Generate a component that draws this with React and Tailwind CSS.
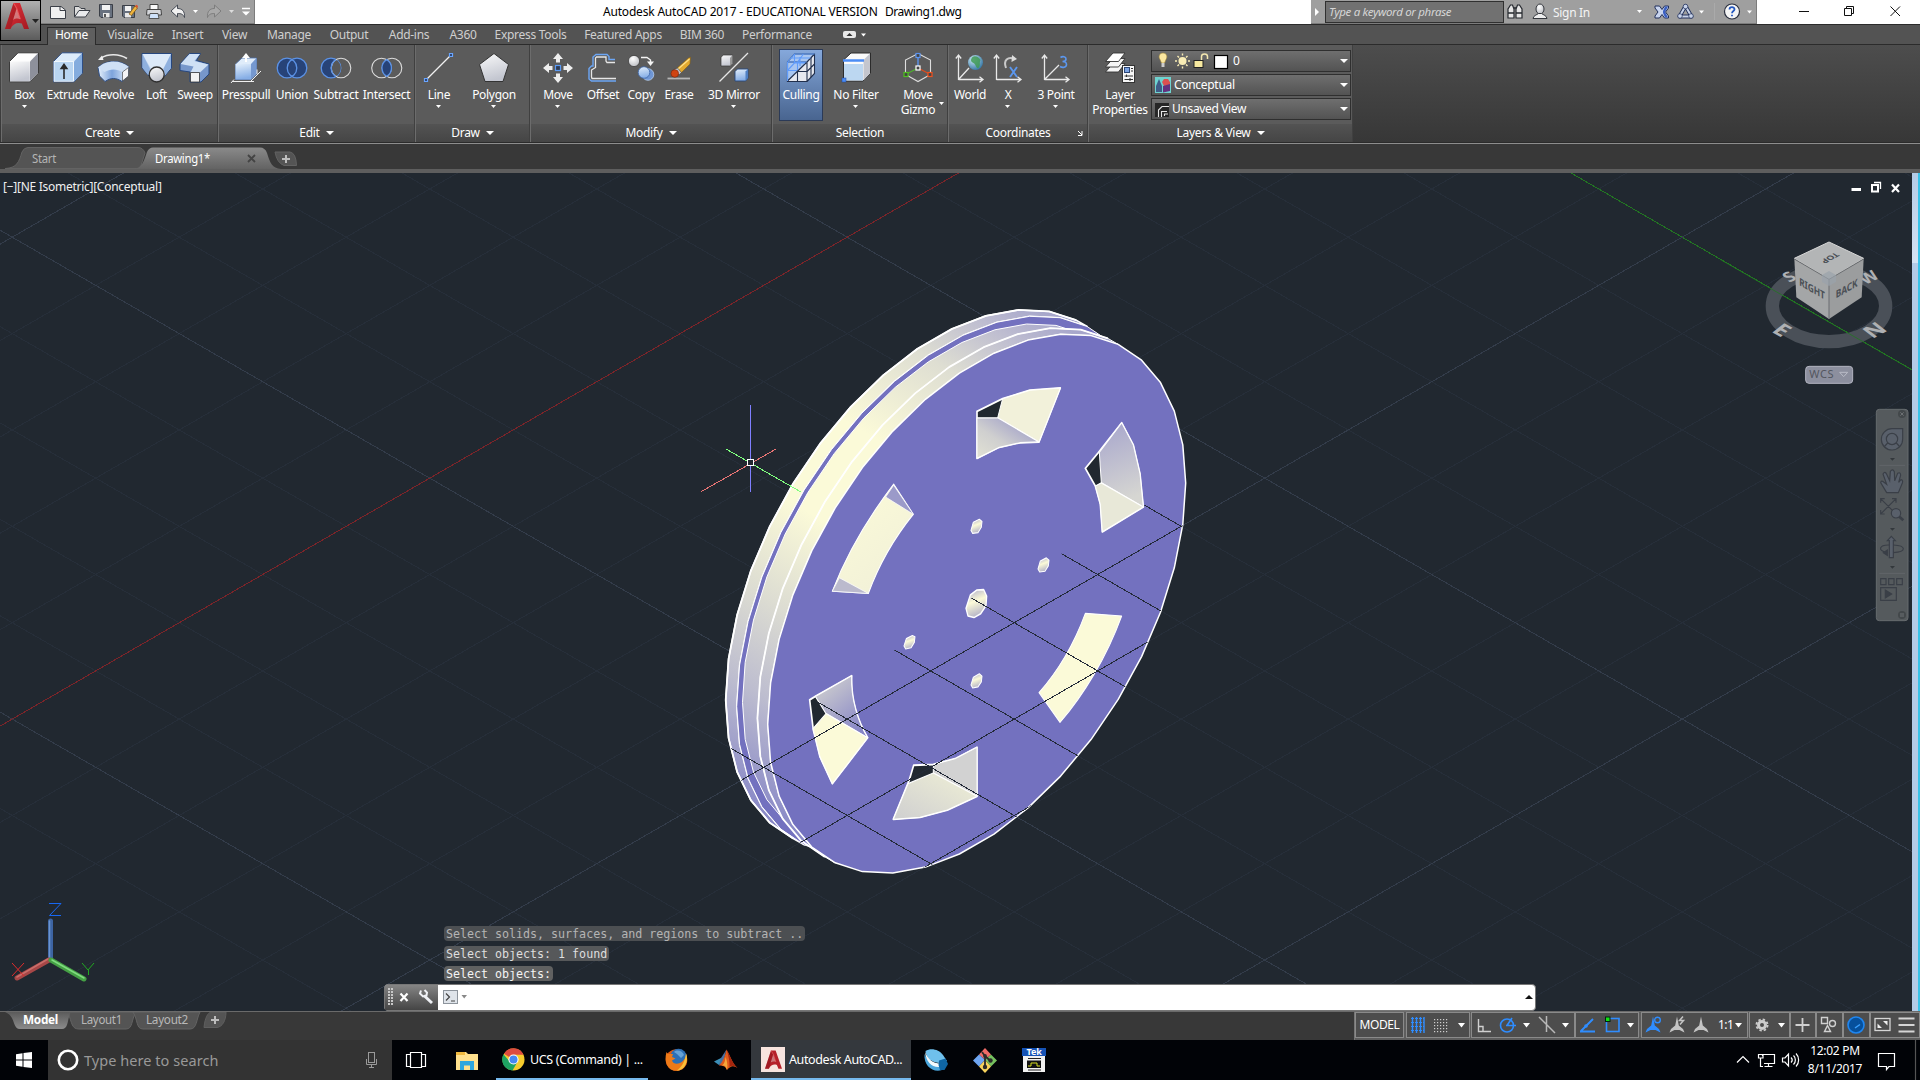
import React from 'react';

/* ---------- small shared pieces ---------- */
const Tri = ({ s = 6, c = '#fff', className = '' }) => (
  <svg width={s} height={Math.ceil(s / 2)} viewBox="0 0 8 4" preserveAspectRatio="none" className={`shrink-0 ${className}`}>
    <path d="M0 0H8L4 4Z" fill={c} />
  </svg>
);
const Ic = ({ children, w = 32, h = 32, className = '' }) => (
  <svg width={w} height={h} viewBox={`0 0 ${w} ${h}`} className={`shrink-0 overflow-visible ${className}`} fill="none">
    {children}
  </svg>
);

const Defs = () => (
  <svg width="0" height="0" className="absolute">
    <defs>
      <linearGradient id="gGrey" x1="0" y1="0" x2="0.3" y2="1"><stop offset="0" stopColor="#fafafa" /><stop offset="1" stopColor="#c3c6d0" /></linearGradient>
      <linearGradient id="gBlue" x1="0" y1="0" x2="0.2" y2="1"><stop offset="0" stopColor="#e3effb" /><stop offset="1" stopColor="#86aee6" /></linearGradient>
      <linearGradient id="gRev" x1="0" y1="0" x2="1" y2="0"><stop offset="0" stopColor="#e8f2fc" /><stop offset=".45" stopColor="#7da3dc" /><stop offset="1" stopColor="#e8f2fc" /></linearGradient>
      <linearGradient id="gRed" x1="0" y1="0" x2="1" y2="1"><stop offset="0" stopColor="#e8323a" /><stop offset="1" stopColor="#a31a22" /></linearGradient>
      <radialGradient id="gBall" cx=".4" cy=".3" r=".8"><stop offset="0" stopColor="#fff" /><stop offset="1" stopColor="#b4b6bc" /></radialGradient>
      <radialGradient id="gGlobe" cx=".35" cy=".3" r=".8"><stop offset="0" stopColor="#cfeaf5" /><stop offset="1" stopColor="#2a6f9f" /></radialGradient>
    </defs>
  </svg>
);

/* ---------- ribbon icons, 32 x 32 ---------- */
const icons = {
  box: <Ic><path d="M.5 9.500 9 .8H29.500V21L21 29.800H.500Z" fill="#fdfdfd" stroke="#3a3a3a" /><path d="M1 9.500H20.800V29.400H1Z" fill="url(#gGrey)" /><path d="M21 9.500 29 1.200V21L21 29.200Z" fill="#8d909b" /></Ic>,
  extrude: <Ic><path d="M1.500 9.500 10 .8H30.500V21L22 29.800H1.500Z" fill="#dcebfa" stroke="#2f4f86" /><path d="M2 9.500H21.500V29.300H2Z" fill="#b9d5f1" stroke="#fff" strokeWidth=".7" /><path d="M22 9.500 30 1.300V21L22 29.200Z" fill="#84acde" /><path d="M12 27V14M9.200 16.500 12 12.500 14.800 16.500Z" stroke="#2a2a2a" strokeWidth="1.600" fill="#2a2a2a" /></Ic>,
  revolve: <Ic><path d="M3 6C10 1.500 21 1.500 29 6.500" stroke="#e8e8e8" strokeWidth="1.600" /><path d="M0 8 4 3.500 5.500 8Z" fill="#eee" /><path d="M0 15.500C8 7.500 23 7.500 31 15L30 24 24 29.500C18 25.500 13 25.500 7 29.500L1.500 24Z" fill="url(#gRev)" stroke="#2f4f86" /><path d="M0 15.500C8 7.500 23 7.500 31 15L24.500 20C19 16.500 12 16.500 6.500 20Z" fill="#cfe0f5" /><path d="M24.500 20 30.500 15.500V24L24.500 29Z" fill="#f4f4f6" stroke="#333" strokeWidth=".6" /></Ic>,
  loft: <Ic><path d="M1 1.500H30.500V16L24 24H8L1 16Z" fill="#b5cdef" stroke="#27477e" /><path d="M1.500 2H30L22 17H10Z" fill="#dce9f8" /><path d="M1.500 2 9 17 7 23 1.500 16ZM30 2 22.500 17 24 23 30 16Z" fill="#8fb0de" /><circle cx="15.700" cy="22.500" r="7.500" fill="url(#gGrey)" stroke="#303030" strokeWidth="1.300" /></Ic>,
  sweep: <Ic><path d="M1 12 10.500 1.500H21.500L17.500 8.500 30 12V22L22 30H11V20L1 18.500Z" fill="#7797cb" stroke="#27477e" /><path d="M1.500 12 10.500 2H21L15.500 9 29.500 12.500 21 20.500H11.500L14.500 14.500Z" fill="#cfe0f5" /><path d="M11.500 20.500H20.500V30H11.500Z" fill="#f2f2f2" stroke="#333" strokeWidth=".8" /></Ic>,
  presspull: <Ic><path d="M5.500 12 12 6H26.500V22L21 27.500H5.500Z" fill="#dfecfa" stroke="#4b6ea8" strokeWidth=".8" /><path d="M5.500 12H21V27.500H5.500Z" fill="url(#gBlue)" /><path d="M21 12 26.500 6V22L21 27.500Z" fill="#7598cf" /><path d="M2 29.500H24M4 27.500 1 31M20 30 31 19M27 17.500V22" stroke="#f0f0f0" /><path d="M16 10V4" stroke="#fff" strokeWidth="2" /><path d="M12 6 16 1 20 6Z" fill="#fff" /></Ic>,
  union: <Ic><circle cx="11" cy="16" r="9.800" fill="#274378" /><circle cx="21" cy="16" r="9.800" fill="#274378" /><circle cx="11" cy="16" r="9.800" stroke="#5b92e6" strokeWidth="1.300" /><circle cx="21" cy="16" r="9.800" stroke="#5b92e6" strokeWidth="1.300" /></Ic>,
  subtract: <Ic><circle cx="11" cy="16" r="9.800" fill="#274378" stroke="#5b92e6" strokeWidth="1.300" /><path d="M16 7.600A9.800 9.800 0 0 1 16 24.400A9.800 9.800 0 0 1 16 7.600Z" fill="#585858" /><circle cx="21" cy="16" r="9.800" stroke="#dcdcdc" strokeWidth="1.100" /><path d="M16 7.600A9.800 9.800 0 0 0 16 24.400" stroke="#5b92e6" strokeWidth="1.300" /></Ic>,
  intersect: <Ic><circle cx="10.500" cy="16" r="9.800" stroke="#dcdcdc" strokeWidth="1.100" /><circle cx="21" cy="16" r="9.800" stroke="#dcdcdc" strokeWidth="1.100" /><path d="M15.700 7.600A9.800 9.800 0 0 1 15.700 24.400A9.800 9.800 0 0 1 15.700 7.600Z" fill="#274378" stroke="#5b92e6" strokeWidth="1.300" /></Ic>,
  line: <Ic><path d="M4 27 27 4" stroke="#f2f2f2" strokeWidth="1.200" /><path d="M1.500 26.500h3v3h-3zM26.500 1.500h3v3h-3z" fill="#2c3f66" stroke="#69a5ff" strokeWidth="1.200" /></Ic>,
  polygon: <Ic><path d="M16 1.500 30.500 12.500 25 29.500H7L1.500 12.500Z" fill="url(#gGrey)" stroke="#333" /></Ic>,
  move: <Ic><path d="M16 1 21 7H18V10.500H14V7H11ZM16 31 21 25H18V21.500H14V25H11ZM1 16 7 11V14H10.500V18H7V21ZM31 16 25 11V14H21.500V18H25V21Z" fill="#eee" /><rect x="13.500" y="13.500" width="5" height="5" stroke="#5b9bf5" strokeWidth="1.200" fill="#2e3a52" /></Ic>,
  offset: <Ic><path d="M29 29H4.500L2 27V16.500L4.500 14H6V5L9 2.500H20L22 4.500V7.500H28" stroke="#6ca6f5" strokeWidth="1.400" /><path d="M29 26.500H5L4.500 25V18L8.500 15.500V6L9.500 5H19V9L20 10.500H28" stroke="#e6e6e6" strokeWidth="1.300" /></Ic>,
  copy: <Ic><circle cx="9" cy="9" r="5.600" fill="url(#gBall)" stroke="#333" strokeWidth=".7" /><path d="M16 5.500H22L25.500 8V10" stroke="#f5f5f5" strokeWidth="1.400" /><path d="M22 9.500H29L25.500 14Z" fill="#f5f5f5" /><circle cx="23" cy="22.500" r="5.800" fill="#6f96d4" stroke="#b8d2f5" strokeWidth=".8" /><circle cx="19" cy="20.500" r="5.800" fill="url(#gBlue)" stroke="#3b66ab" strokeWidth=".8" /></Ic>,
  erase: <Ic><path d="M4.500 26.500H27" stroke="#b5b5b5" strokeWidth="1.800" /><path d="M13 17 25.500 6 27.500 5 27 12 17.500 21.500Z" fill="#e3a92e" stroke="#7a5a1c" strokeWidth=".6" /><path d="M14 18 26.500 7" stroke="#ffe08a" strokeWidth="1.200" /><path d="M11 17.500 14.500 16 18.500 20.500 16 23Z" fill="#bfc3cb" stroke="#333" strokeWidth=".5" /><circle cx="11.800" cy="21.500" r="3.800" fill="#d04412" stroke="#7c2407" strokeWidth=".6" /></Ic>,
  mirror: <Ic><path d="M1.500 29.500 30 1" stroke="#e6e6e6" strokeWidth="1.200" /><path d="M3 5.500 5 3H14.500V11.500L12 14H3Z" fill="url(#gGrey)" stroke="#333" strokeWidth=".7" /><path d="M12 6 14.500 3V11.500L12 14Z" fill="#999" /><path d="M17 19.500 19.500 17H30V26L27.500 29H17Z" fill="url(#gBlue)" stroke="#27477e" strokeWidth=".9" /><path d="M27.500 19.500 30 17V26L27.500 29Z" fill="#4f80c4" /></Ic>,
  culling: <Ic><path d="M2.500 10 9.500 2H29.500L2.500 29Z" fill="#a9c6f0" /><path d="M12 29.500H22L30 21V2L2 29Z" fill="#e6e8ef" /><path d="M2 29.500 22 10M2.500 10H22V29.500H2.500ZM2.500 10 9.500 2H29.500V21.500L22 29.500M22 10 29.500 2" stroke="#22304d" strokeWidth="1.100" /><path d="M12 19.500H22M12.500 20V29.500M26 6V25M22 19.500 29.500 12" stroke="#22304d" strokeWidth="1.100" /><path d="M2.500 10 9.500 2H29.500M2.500 10V29M2.500 10H21.500M6 6H25.500M2.500 18.500H12M2.500 18.500 9.500 11V2M12.500 10V18M12.500 10 18.500 2M9.500 11H20M15 5V14" stroke="#5f9bfa" strokeWidth="1.100" /></Ic>,
  nofilter: <Ic><path d="M3.500 8 11 1H30.500V21.500L23 29H3.500Z" fill="#fafafa" stroke="#2b2b2b" /><path d="M4 12H23V28.500H4Z" fill="#bcd7f1" /><path d="M23.500 8 30 1.500V21.500L23.500 28.500Z" fill="#c4c6ce" /><path d="M3 8.500H24" stroke="#4b8cf5" strokeWidth="2.500" /><rect x="2" y="26" width="4" height="4" fill="#4b8cf5" stroke="#1e49a0" strokeWidth=".5" /></Ic>,
  gizmo: <Ic><path d="M16 1.500 28.500 8V22.500L16 29.500 3.500 22.500V8Z" stroke="#dedede" strokeWidth="1.100" /><path d="M16 16V3" stroke="#5b93ee" strokeWidth="1.400" /><path d="M16 16 4.500 22" stroke="#4fae2e" strokeWidth="1.400" /><path d="M16 16 27.500 22" stroke="#dc4c1e" strokeWidth="1.400" /><g fill="#444" strokeWidth="1.200"><rect x="14" y="1.500" width="4" height="4" stroke="#5b93ee" /><rect x="2" y="20.500" width="4" height="4" stroke="#4fc11f" /><rect x="26" y="20.500" width="4" height="4" stroke="#f0521e" /><rect x="14" y="14" width="4" height="4" stroke="#fff" /></g></Ic>,
  world: <Ic><path d="M4.500 28V4M1.800 6.500 4.500 3 7.200 6.500M4.500 27.500H28M25.500 24.800 29 27.500 25.500 30.200M4.500 27.500 15 16" stroke="#e9e9e9" strokeWidth="1.300" /><circle cx="21.500" cy="10.500" r="7.500" fill="url(#gGlobe)" /><path d="M18.500 5C21 3 25 5 26.500 8 25 11 27 13 24.500 16 22 17 22 12 19.500 11 17 10 16 8 18.500 5Z" fill="#3f9a55" opacity=".85" /></Ic>,
  xaxis: <Ic><path d="M4.500 28V4M1.800 6.500 4.500 3 7.200 6.500M4.500 27.500H28M25.500 24.800 29 27.500 25.500 30.200" stroke="#e9e9e9" strokeWidth="1.300" /><path d="M14 16C11 8 16 4.500 22 6.500" stroke="#c9c9c9" strokeWidth="2" /><path d="M20 3 25 7 19.500 10Z" fill="#ddd" /><path d="M18 15 25 25M25 15 18 25" stroke="#5c97ee" strokeWidth="1.900" /></Ic>,
  point3: <Ic><path d="M4.500 28V4M1.800 6.500 4.500 3 7.200 6.500M4.500 27.500H28M25.500 24.800 29 27.500 25.500 30.200M4.500 27.500 19 13" stroke="#e9e9e9" strokeWidth="1.300" /><path d="M20.500 5.500C22.500 4 26 4.500 26 7 26 9 24.500 9.500 22.500 9.500 25 9.500 26.500 10.500 26.500 12.500 26.500 15.500 22.500 16 20 14.500" stroke="#5c97ee" strokeWidth="1.600" /></Ic>,
  layers: <Ic><path d="M1.500 20 9 11.500H21L14.500 20Z" fill="#f5f5f5" stroke="#333" strokeWidth=".9" /><path d="M1.500 15 9 6.500H21L14.500 15Z" fill="#f5f5f5" stroke="#333" strokeWidth=".9" /><path d="M1.500 9.500 9 1H21L14.500 9.500Z" fill="#fff" stroke="#333" strokeWidth=".9" /><rect x="18.500" y="13.500" width="12" height="17" fill="#f7f7f7" stroke="#333" /><rect x="20.500" y="15.500" width="5" height="5" fill="#7ba3e2" stroke="#2c4676" /><path d="M27 16.500H29M27 19H29M20.500 24H29M20.500 27.500H29M22.500 22.500V25M26 26V29" stroke="#333" strokeWidth="1" /></Ic>,
};

/* ---------- ribbon structure ---------- */
const Btn = ({ icon, label, w, arrow, second, on }) => (
  <div className={`${w} flex flex-col items-center h-[72px] shrink-0 ${on ? 'bg-gradient-to-b from-[#86a9dc] to-[#48648f] outline outline-1 -outline-offset-1 outline-[#2b3a57]' : ''}`}>
    <div className="h-8 mt-[3px]">{icons[icon]}</div>
    <div className="mt-[2px] h-[15px] leading-[17px] text-white">{label}</div>
    {second && (
      <div className="relative leading-[17px] text-white">{second}
        <Tri s={5} className={`absolute -right-[9px] top-[1px] ${arrow ? '' : 'hidden'}`} />
      </div>
    )}
    {arrow && !second && <Tri s={5} className="mt-[4px] mr-px" />}
  </div>
);
const Panel = ({ w, title, children, tri, corner, pad = '' }) => (
  <div className={`${w} h-[97px] shrink-0 flex flex-col bg-[#5b5b5b] border-l border-l-[#6c6c6c] border-r border-r-[#404040]`}>
    <div className={`flex h-[79px] pt-1 -ml-px -mr-px ${pad}`}>{children}</div>
    <div className="relative h-[18px] flex items-center justify-center gap-[6px] bg-gradient-to-b from-[#535353] to-[#454545] text-white">
      <span>{title}</span>
      {tri && <Tri s={8} />}
      {corner && <svg width="6" height="6" className="absolute right-[4px] top-[6px]" fill="none" stroke="#fff"><path d="M1 1 5 5M5 1V5.500H1" /></svg>}
    </div>
  </div>
);
const Drop = ({ children }) => (
  <div className="h-[22px] w-[200px] flex items-center border border-[#2f2f2f] bg-gradient-to-b from-[#6f6f6f] to-[#535353] pl-[3px] pr-[2px] text-white">
    {children}<Tri s={8} className="ml-auto" />
  </div>
);

const menu = [['Visualize', 'w-[67px]'], ['Insert', 'w-[47px]'], ['View', 'w-[47px]'], ['Manage', 'w-[62px]'], ['Output', 'w-[58px]'], ['Add-ins', 'w-[62px]'], ['A360', 'w-[46px]'], ['Express Tools', 'w-[89px]'], ['Featured Apps', 'w-[96px]'], ['BIM 360', 'w-[62px]'], ['Performance', 'w-[88px]']];

function TitleBar() {
  return (
    <div className="h-6 flex bg-white relative shrink-0">
      <div className="w-[255px] bg-[#9f9f9f] border-b border-r border-[#7c7c7c] flex items-center pl-[49px] shrink-0">
        <Ic w={206} h={23}>
          <path d="M1.500 6.500H12L16.500 10V18.500H1.500Z" fill="#f0f0f0" stroke="#3b3f47" /><path d="M11 6.500V10.500H16" stroke="#3b3f47" />
          <path d="M25.500 17V6.500H30L32 8.500H36V10.500" fill="#ddd" stroke="#3b3f47" /><path d="M25.500 17 30 10.500H41L36.500 17Z" fill="#e9eaec" stroke="#3b3f47" />
          <g transform="translate(50 4)"><path d="M.5 .500H13.500V13.500H2L.500 12Z" fill="#68717f" stroke="#3b3f47" /><path d="M3 1H11V6H3Z" fill="#f2f2f2" /><path d="M4 9H10.500V13.500H4Z" fill="#e8e8e8" /><path d="M5 10H7V13H5Z" fill="#555" /></g>
          <g transform="translate(73 4)"><path d="M.5 1.500H12.500V13.500H2L.500 12Z" fill="#68717f" stroke="#3b3f47" /><path d="M3 2H9V7H3Z" fill="#f2f2f2" /><path d="M3 9H9V13.500H3Z" fill="#e8e8e8" /><path d="M7 10 13 2 15.500 4 9.500 11.500Z" fill="#f0b43c" stroke="#70511c" strokeWidth=".7" /><path d="M13 2 15.500 4 16 2 14.500 .8Z" fill="#e0502a" /></g>
          <g transform="translate(97 4)"><path d="M4 .5H12V6H4Z" fill="#fafafa" stroke="#444" /><path d="M1 5.500H15L15.500 11H.500Z" fill="#d5d7db" stroke="#444" /><path d="M4 9.500H12L13 14.500H3Z" fill="#cfe2fa" stroke="#555" /></g>
          <path d="M122 11 128.500 5V8.500C133 8.500 136 11 135.500 17.500 134 14 132 13.500 128.500 13.500V17Z" fill="#f1f1f1" stroke="#454a54" />
          <path d="M144 10H149L146.500 13Z" fill="#fff" />
          <path d="M172 11 165.500 5V8.500C161 8.500 158 11 158.500 17.500 160 14 162 13.500 165.500 13.500V17Z" fill="#a9a9a9" stroke="#7d7d7d" />
          <path d="M180 10H185L182.500 13Z" fill="#ddd" />
          <path d="M193 8.500H201" stroke="#fff" strokeWidth="1.500" /><path d="M193 11.500H201L197 15.500Z" fill="#fff" />
        </Ic>
      </div>
      <div className="w-[1056px] shrink-0 flex pl-[348px] pt-[3px] leading-[18px] text-black tracking-[-0.19px] whitespace-nowrap">
        <span className="w-[282px]">Autodesk AutoCAD 2017 - EDUCATIONAL VERSION</span>
        <span className="tracking-[-0.450px]">Drawing1.dwg</span>
      </div>
      <div className="w-[446px] shrink-0 bg-[#9f9f9f] border-b border-r border-[#7c7c7c] flex items-center">
        <svg width="14" height="23" className="shrink-0"><path d="M4 8V16L8 12Z" fill="#fff" /></svg>
        <div className="w-[179px] mr-px shrink-0 h-[22px] bg-[#717171] border border-[#303030] italic text-[#d6d6d6] leading-[19px] pl-[3px] text-[11.500px] tracking-[-0.320px]">Type a keyword or phrase</div>
        <Ic w={44} h={23}>
          <g transform="translate(-2)"><path d="M5 18V9L7.500 5H9.500L11 9V18ZM13 18V9L14.500 5H16.500L19 9V18Z" fill="#e6e6e6" stroke="#25282e" strokeWidth="1.200" /><path d="M5 13H11M13 13H19M11 8H13" stroke="#25282e" strokeWidth="1.400" /></g>
          <ellipse cx="35" cy="9" rx="4" ry="5" fill="url(#gBall)" stroke="#33363c" /><path d="M28 18.500C28.500 15.500 31.500 15 33.500 13.500H36.500C38.500 15 41.500 15.500 42 18.500Z" fill="#eee" stroke="#33363c" />
        </Ic>
        <span className="text-[#f4f4f4] text-[12px] ml-[4px] mt-[2px] w-[84px] shrink-0">Sign In</span>
        <Tri s={5} />
        <Ic w={112} h={23}>
          <g transform="translate(12 5)"><path d="M1 1H5.500L8 4.500 10.500 1H14.500V3L11.500 7 14.500 11V13H10.500L8 9.500 5.500 13H1V11L4 7 1 3Z" fill="#c8d4ee" stroke="#22315c" /><path d="M9 6 11 1.500H14L11 7 14 12.500H11L9 8Z" fill="#3a5fc2" /></g>
          <g transform="translate(35 4)"><path d="M8.500 2 14.500 12.500H2.500Z" fill="none" stroke="#22315c" strokeWidth="3.800" strokeLinejoin="round" /><path d="M8.500 2 14.500 12.500H2.500Z" stroke="#c9d4ea" strokeWidth="2" strokeLinejoin="round" /><g fill="#c9d4ea" stroke="#22315c" strokeWidth=".7"><circle cx="8.500" cy="2.500" r="2.300" /><circle cx="14" cy="12" r="2.300" /><circle cx="3" cy="12" r="2.300" /></g></g>
          <path d="M57 10.500H62L59.500 13.500Z" fill="#fff" /><path d="M72.500 3V20" stroke="#aaa" />
          <circle cx="90" cy="11.500" r="7.500" fill="#f5f5f5" stroke="#2c3140" strokeWidth="1.200" /><path d="M87.500 9.500C87.500 6.500 92.500 6.500 92.500 9.300 92.500 11 90 11 90 13.300M90 14.700V16.200" stroke="#2458c0" strokeWidth="1.800" />
          <path d="M105 10.500H110L107.500 13.500Z" fill="#fff" />
        </Ic>
      </div>
      <svg width="163" height="24" fill="none" stroke="#111" className="shrink-0"><path d="M42 11.500H52" /><path d="M87.500 8.500H94.500V15.500H87.500ZM89.500 8V6.500H96.500V13.500H95" /><path d="M133.500 6.500 143 16M143 6.500 133.500 16" /></svg>
    </div>
  );
}

function Ribbon() {
  return (
    <>
      <div className="h-[21px] bg-[#535353] border-t border-[#2b2b2b] flex pl-[47px] text-[#cfcfcf] shrink-0 border-b">
        <div className="w-[49px] mr-px h-[18px] mt-[2px] bg-[#5f5f5f] border border-b-0 border-[#2b2b2b] text-white text-center leading-[14px]">Home</div>
        {menu.map(([t, w]) => <div key={t} className={`${w} text-center leading-[19px] whitespace-nowrap`}>{t}</div>)}
        <svg width="40" height="19" className="ml-[20px]"><rect x="2" y="6" width="13" height="7" rx="2" fill="#e9e9e9" /><path d="M5.500 11 8.500 8 11.500 11Z" fill="#333" /><path d="M20 8.500H25L22.500 11.500Z" fill="#fff" /></svg>
      </div>
      <div className="h-[97px] flex pl-[1px] bg-gradient-to-b from-[#4d4d4d] to-[#373737] shrink-0">
        <Panel w="w-[217px]" title="Create" tri pad="pl-[1px]">
          <Btn icon="box" label="Box" w="w-[45px]" arrow /><Btn icon="extrude" label="Extrude" w="w-[41px]" /><Btn icon="revolve" label="Revolve" w="w-[51px]" /><Btn icon="loft" label="Loft" w="w-[35px]" /><Btn icon="sweep" label="Sweep" w="w-[42px]" />
        </Panel>
        <Panel w="w-[197px]" title="Edit" tri pad="pl-[3px]">
          <Btn icon="presspull" label="Presspull" w="w-[50px]" /><Btn icon="union" label="Union" w="w-[42px]" /><Btn icon="subtract" label="Subtract" w="w-[46px]" /><Btn icon="intersect" label="Intersect" w="w-[55px]" />
        </Panel>
        <Panel w="w-[115px]" title="Draw" tri>
          <Btn icon="line" label="Line" w="w-[48px]" arrow /><Btn icon="polygon" label="Polygon" w="w-[62px]" arrow />
        </Panel>
        <Panel w="w-[242px]" title="Modify" tri pad="pl-[4px]">
          <Btn icon="move" label="Move" w="w-[48px]" arrow /><Btn icon="offset" label="Offset" w="w-[42px]" /><Btn icon="copy" label="Copy" w="w-[34px]" /><Btn icon="erase" label="Erase" w="w-[42px]" /><Btn icon="mirror" label="3D Mirror" w="w-[68px]" arrow />
        </Panel>
        <Panel w="w-[176px]" title="Selection" pad="pl-[7px]">
          <Btn icon="culling" label="Culling" w="w-[44px]" on /><Btn icon="nofilter" label="No Filter" w="w-[66px]" arrow /><Btn icon="gizmo" label="Move" second="Gizmo" w="w-[58px]" arrow />
        </Panel>
        <Panel w="w-[140px]" title="Coordinates" corner>
          <Btn icon="world" label="World" w="w-[44px]" /><Btn icon="xaxis" label="X" w="w-[32px]" arrow /><Btn icon="point3" label="3 Point" w="w-[64px]" arrow />
        </Panel>
        <Panel w="w-[265px]" title="Layers &amp; View" tri pad="pl-[1px]">
          <Btn icon="layers" label="Layer" second="Properties" w="w-[62px]" />
          <div className="flex flex-col gap-[2px] pt-[1px]">
            <Drop>
              <Ic w={74} h={20}>
                <path d="M8 2C4.500 2 3 5.500 5 8.500L6.500 12H9.500L11 8.500C13 5.500 11.500 2 8 2Z" fill="#fbe7a0" stroke="#a58a3a" strokeWidth=".6" /><path d="M6.500 12H9.500V16H6.500Z" fill="#ccc" />
                <circle cx="27.500" cy="10" r="4" fill="#f9edb5" /><path d="M27.500 2.500V4.500M27.500 15.500V17.500M20 10H22M33 10H35M22.500 5 24 6.500M31 13.500 32.500 15M32.500 5 31 6.500M24 13.500 22.500 15" stroke="#f9edb5" strokeWidth="1.400" />
                <rect x="39" y="9.500" width="9" height="7" fill="#f7e9a0" stroke="#222" /><path d="M46.500 9V5.500C46.500 2 52.500 2 52.500 5.500V8" stroke="#f3e7b0" strokeWidth="1.500" />
                <rect x="59.500" y="4.500" width="13" height="13" fill="#fff" stroke="#000" strokeWidth="1.200" />
              </Ic>
              <span className="ml-[4px]">0</span>
            </Drop>
            <Drop>
              <Ic w={16} h={16}><path d="M0 0H16V16H0Z" fill="#6fd3d0" /><path d="M1 15V9L4 2 7 9V15Z" fill="#3f5b87" /><path d="M7 5 9 2H13L15 5V8L9 9Z" fill="#dc5050" /><path d="M8 9 15 7V14L8 15.500Z" fill="#63307f" /></Ic>
              <span className="ml-[3px]">Conceptual</span>
            </Drop>
            <Drop>
              <Ic w={14} h={14} className="mt-[2px]"><path d="M0 0H14V14H0Z" fill="#262626" /><path d="M3.500 14V7L7 3.500H14M6.500 14V8.500H12M9.500 13V11H13" stroke="#e5e5e5" strokeWidth="1.100" /></Ic>
              <span className="ml-[3px] tracking-[-0.350px]">Unsaved View</span>
            </Drop>
          </div>
        </Panel>
      </div>
      <div className="h-[2px] bg-[#8d8d8d] border-t border-[#2b2b2b] shrink-0" />
    </>
  );
}

function FileTabs() {
  return (
    <div className="h-[29px] bg-[#383838] border-b-4 border-[#5e5e5e] shrink-0 relative">
      <svg width="310" height="25" className="block">
        <defs>
          <linearGradient id="ft" x1="0" y1="0" x2="0" y2="1"><stop offset="0" stopColor="#8a8a8a" /><stop offset="1" stopColor="#636363" /></linearGradient>
        </defs>
        <path d="M5 24.500C17 24 19 18 22 8Q24 3.500 28 3.500H138Q143 3.500 145 9L140 24.500Z" fill="#545454" stroke="#636363" />
        <path d="M134 25C142 24 144 17 147 8Q149 3.500 153 3.500H260Q265 3.500 267 9C270 19 272 24 281 25Z" fill="url(#ft)" />
        <path d="M275 8H290Q296 9 296.500 21.500H284Q277 19 275 8Z" fill="#545454" stroke="#626262" />
        <path d="M286 11V19M282 15H290" stroke="#bdbdbd" strokeWidth="2" />
        <path d="M248 11 255 18M255 11 248 18" stroke="#444" strokeWidth="1.800" />
        <text x="32" y="19" fill="#b4b4b4" className="text-[12px]" textLength="24" lengthAdjust="spacingAndGlyphs">Start</text>
        <text x="155" y="19" fill="#fff" className="text-[12px]" textLength="55" lengthAdjust="spacingAndGlyphs">Drawing1*</text>
      </svg>
    </div>
  );
}

/* ---------- wheel geometry: 38-sided isometric circle in the XZ plane ---------- */
const CX = 976.7, CY = 603.6, R = 241.3, N = 38;
const pt = (i, off, s = 1) => {
  const t = (i * 2 * Math.PI) / N;
  return [CX + R * s * 0.866 * Math.cos(t) - off * 0.866, CY - R * s * 0.5 * Math.cos(t) + R * s * Math.sin(t) - off * 0.5];
};
const arc = (a, b, off, s) => {
  const n = Math.abs(b - a);
  return Array.from({ length: n + 1 }, (_, i) => pt(a + Math.sign(b - a) * i, off, s));
};
const str = (p) => p.map(([x, y]) => `${x.toFixed(1)},${y.toFixed(1)}`).join(' ');
const ring = (off, s) => str(arc(0, N - 1, off, s));
const A0 = 14, A1 = 33;
const strip = (o1, o2, s) => str([...arc(A0, A1, o1, s), ...arc(A1, A0, o2, s)]);
const silhouette = str([...arc(A0, A1, 48.5), ...arc(A1 - N, A0, 0)]);

const lattice = (dir) => {
  const out = [];
  for (let k = -12; k <= 18; k++) {
    const x0 = 930.7 + k * 167;
    const major = dir > 0 ? ((k + 1) % 5 === 0) : (k % 5 === 0);
    out.push({ k, major, x1: x0 - dir * 27.7, x2: x0 + dir * 1426, y1: 173, y2: 1012 });
  }
  return out;
};
const gridLines = [...lattice(1).map((l) => ({ ...l, d: 1 })), ...lattice(-1).map((l) => ({ ...l, d: -1 }))];
const colourOf = (l) => (l.d === -1 && l.k === 0 ? '#7c2429' : l.d === 1 && l.k === 4 ? '#227522' : l.major ? '#333c4a' : '#262e39');

function Scene() {
  return (
    <svg width="1912" height="838" viewBox="0 173 1912 838" className="absolute left-0 top-0" fill="none">
      <defs>
        <linearGradient id="rim" gradientUnits="userSpaceOnUse" x1="1110" y1="325" x2="800" y2="845">
          <stop offset="0" stopColor="#9a9ac8" /><stop offset=".1" stopColor="#bdbcd0" /><stop offset=".2" stopColor="#deded2" /><stop offset=".36" stopColor="#fbfad8" /><stop offset=".52" stopColor="#fbfad8" /><stop offset=".68" stopColor="#dcdcd2" /><stop offset=".82" stopColor="#bdbdcf" /><stop offset="1" stopColor="#8585c6" />
        </linearGradient>
        <linearGradient id="cv1" x1="1" y1="0" x2="0" y2="1"><stop offset="0" stopColor="#8e8dc6" /><stop offset=".6" stopColor="#cfcfcf" /><stop offset="1" stopColor="#e2e2d4" /></linearGradient>
        <linearGradient id="cv2" x1="0" y1="0" x2="0.2" y2="1"><stop offset="0" stopColor="#a6a5cc" /><stop offset="1" stopColor="#d6d6d2" /></linearGradient>
        <linearGradient id="cv3" x1="0" y1="0" x2=".6" y2="1"><stop offset="0" stopColor="#fcfbd8" /><stop offset="1" stopColor="#f2f1d8" /></linearGradient>
        <linearGradient id="cv4" x1="0" y1="0" x2=".7" y2="1"><stop offset="0" stopColor="#d8d8d0" /><stop offset="1" stopColor="#8685c6" /></linearGradient>
        <linearGradient id="cv5" x1="1" y1="0" x2="0" y2="1"><stop offset="0" stopColor="#f0f0d6" /><stop offset="1" stopColor="#cfcfd0" /></linearGradient>
        <linearGradient id="hole" x1="0" y1="0" x2=".3" y2="1"><stop offset="0" stopColor="#a8a7c8" /><stop offset=".5" stopColor="#fbfad8" /><stop offset="1" stopColor="#b8b7c8" /></linearGradient>
        <clipPath id="sil"><polygon points={silhouette} /></clipPath>
        <clipPath id="low"><polygon points="1200,474 1145,505 1062,553.500 972,598 895,650 818,702 728,747 500,883 500,1000 1500,1000 1500,474" /></clipPath>
      </defs>
      <g strokeWidth="1" shapeRendering="crispEdges">
        {gridLines.map((l, i) => <line key={i} x1={l.x1} y1={l.y1} x2={l.x2} y2={l.y2} stroke={colourOf(l)} />)}
        {gridLines.filter((l) => l.major).map((l, i) => <line key={`m${i}`} x1={l.x1} y1={l.y1} x2={l.x2} y2={l.y2} stroke={colourOf(l)} />)}
      </g>

      <g stroke="#fff" strokeWidth="1.500" strokeLinejoin="round">
        <polygon points={strip(48.5, 35.8)} fill="url(#rim)" />
        <polygon points={ring(35.8)} fill="#7371bf" strokeWidth="1" />
        <polygon points={strip(36.4, 11.9, 0.97)} fill="url(#rim)" strokeWidth="1" />
        <polygon points={strip(11.9, 0)} fill="url(#rim)" strokeWidth="1" />
        <polygon points={ring(0)} fill="#7371bf" strokeWidth="1.500" />
        <polyline points={str(arc(A0, A1, 11.9))} strokeWidth="1.800" />
        <polyline points={str(arc(A0, A1, 48.5))} strokeWidth="1.800" />
      </g>

      <g transform="translate(700 290) scale(.33333 .38268)" stroke="#fff" strokeWidth="5" strokeLinejoin="round">
        {/* spoke windows */}
        <path d="M831 440V317L908 284 990 262 1081 256 1017 397 960 399 895 412Z" fill="#212830" />
        <path d="M908 284 990 262 1081 256 1017 397 893 334Z" fill="#f2f1da" strokeWidth="3" />
        <path d="M831 440V334H893L1017 397 960 399 895 412Z" fill="url(#cv1)" strokeWidth="3" />
        <path d="M1265 347 1300 405 1320 480 1330 567 1207 632 1201 560 1186 512 1156 466 1195 425Z" fill="#212830" />
        <path d="M1265 347 1300 405 1320 480 1330 567 1204 504 1198 424Z" fill="url(#cv2)" strokeWidth="3" />
        <path d="M1330 567 1207 632 1201 560 1186 512 1204 504Z" fill="#e8e8d8" strokeWidth="3" />
        <path d="M581 507 640 586C590 640 540 710 505 793L397 787C440 690 500 600 581 507Z" fill="url(#cv3)" strokeWidth="3" />
        <path d="M581 510 640 586 557 541Z" fill="#9b9ac9" strokeWidth="2" />
        <path d="M397 787 418 752 505 793Z" fill="#bbbacd" strokeWidth="2" />
        <path d="M1156 845 1265 852C1220 960 1150 1060 1080 1130L1017 1052C1070 1000 1120 930 1156 845Z" fill="#fbfad8" strokeWidth="3" />
        <path d="M455 1008C452 1070 475 1130 503 1170L397 1290 360 1220 340 1150 329 1071 346 1062Z" fill="#212830" />
        <path d="M455 1008C452 1070 475 1130 503 1170L378 1107 346 1062Z" fill="url(#cv4)" strokeWidth="3" />
        <path d="M503 1170 397 1290 360 1220 339 1146 378 1107Z" fill="#fbfad8" strokeWidth="3" />
        <path d="M831 1195V1323L742 1359 660 1378 580 1383 628 1280 641 1242 700 1240 765 1225Z" fill="#212830" />
        <path d="M831 1195V1323L700 1262 700 1240 765 1225Z" fill="#d2d2d2" strokeWidth="3" />
        <path d="M831 1323 742 1359 660 1378 580 1383 624 1290 700 1262Z" fill="url(#cv5)" strokeWidth="3" />
        {/* bolt holes and hub */}
        <path d="M820 607 838 599 846 605 844 620 834 634 818 636 813 628Z" fill="url(#hole)" strokeWidth="3" />
        <path d="M1021 708 1039 700 1047 706 1045 721 1035 735 1019 737 1014 729Z" fill="url(#hole)" strokeWidth="3" />
        <path d="M619 911 637 903 645 906 643 921 633 935 617 938 612 930Z" fill="url(#hole)" strokeWidth="3" />
        <path d="M820 1012 838 1003 846 1009 844 1024 834 1037 818 1040 813 1032Z" fill="url(#hole)" strokeWidth="3" />
        <path d="M811 797 830 784 851 783 860 800 858 825 842 846 822 856 804 852 798 832Z" fill="url(#hole)" strokeWidth="4" />
      </g>

      <g clipPath="url(#sil)"><g clipPath="url(#low)" strokeWidth="1" shapeRendering="crispEdges">
        {gridLines.map((l, i) => <line key={i} x1={l.x1} y1={l.y1} x2={l.x2} y2={l.y2} stroke="#232a38" />)}
      </g></g>

      {/* crosshair */}
      <g shapeRendering="crispEdges">
        <path d="M750.500 405V492" stroke="#7f7fff" /><path d="M701.500 491.500 776 449" stroke="#e87474" /><path d="M726 449 801 492" stroke="#7fff7f" />
        <rect x="747.500" y="459.500" width="6" height="6" fill="#212830" stroke="#fff" />
      </g>

      {/* axis tripod */}
      <g strokeLinecap="round">
        <path d="M50.500 959V921" stroke="#3d64a2" strokeWidth="5" /><path d="M49.500 958V921" stroke="#6a93cf" strokeWidth="1.500" />
        <path d="M49 960 17 978" stroke="#a74747" strokeWidth="5" /><path d="M48 959 17 977" stroke="#c96e6a" strokeWidth="1.500" />
        <path d="M51 960 84 979" stroke="#45a045" strokeWidth="5" /><path d="M52 960 84 978" stroke="#7fdc7f" strokeWidth="1.500" />
        <g strokeLinecap="butt" strokeWidth="1"><path d="M49 903.500H61L49.500 915.500H61" stroke="#1767f2" /><path d="M12 963 24 976M24 963 12 976" stroke="#e02c2c" /><path d="M82 963 88 970 94 963M88.500 970V975" stroke="#21a821" /></g>
      </g>
    </svg>
  );
}

function ViewCube() {
  return (
    <svg width="200" height="420" viewBox="0 0 600 1260" className="absolute left-[1720px] top-[47px]" fill="none">
      <ellipse cx="327" cy="258" rx="170" ry="107" stroke="#4a5058" strokeWidth="40" />
      <g fill="#aeb0b3" fontWeight="700" fontSize="62" textAnchor="middle">
        <text transform="matrix(.95 .52 -.8 .62 186 330)" x="0" y="22">E</text>
        <text transform="matrix(.95 -.52 .8 .62 464 330)" x="0" y="22">N</text>
        <text transform="matrix(.75 -.35 .6 .55 207 170)" x="0" y="22">S</text>
        <text transform="matrix(.75 -.35 .6 .55 446 172)" x="0" y="22">W</text>
      </g>
      <path d="M327 66 431 115 327 178 223 115Z" fill="#b3b5b6" stroke="#d6d6d6" strokeWidth="3" />
      <path d="M223 117 327 178V297L229 232Z" fill="#a4a6a7" /><path d="M431 117 327 178V297L425 232Z" fill="#9b9d9e" />
      <path d="M223 117 327 178 431 117M327 178V295" stroke="#6a6d70" strokeWidth="3" />
      <path d="M306 165 327 153 348 165V186L327 198 306 186Z" fill="#9aa3ab" opacity=".7" />
      <g fill="#4b5056" fontWeight="700" fontSize="29" textAnchor="middle">
        <text transform="matrix(.87 .5 0 1.100 276 217)">RIGHT</text>
        <text transform="matrix(.87 -.5 0 1.100 380 217)">BACK</text>
        <text transform="matrix(-.8 .45 -.7 -.45 323 109)">TOP</text>
      </g>
      <path d="M0 118 573 448" stroke="#227522" strokeWidth="3" opacity=".8" />
      <rect x="257" y="439" width="141" height="51" rx="10" fill="#8c8f9e" stroke="#b2b4c0" strokeWidth="3" />
      <text x="268" y="474" fontSize="33" fill="#53565f" textLength="72">WCS</text>
      <path d="M359 457H383L371 470Z" stroke="#b9bbc6" strokeWidth="3" />
      <rect x="469" y="568" width="95" height="634" rx="9" fill="#555a5d" stroke="#666b6e" strokeWidth="3" />
      <circle cx="546" cy="582" r="12" fill="#43484b" /><path d="M541 577 551 587M551 577 541 587" stroke="#6d7174" strokeWidth="3" />
      <circle cx="546" cy="1185" r="12" fill="#43484b" /><path d="M540 1182H552M540 1188H552" stroke="#6d7174" strokeWidth="3" />
      <g stroke="#3a3f47" strokeWidth="3.500">
        <path d="M516 626H548V657A32 32 0 1 1 516 626Z" fill="#59606b" /><circle cx="516" cy="657" r="17" /><path d="M492 681 503 669M540 681 529 669" />
        <path d="M500 818 482 788Q484 780 491 786L500 793 489 762Q495 752 500 763L509 782 511 754Q518 745 523 755L524 782 533 760Q541 755 542 765L536 787 543 779Q550 780 547 789L535 818Z" fill="#59606b" />
        <path d="M484 838 526 880M526 838 484 880M482 848V836H494M516 836H528V848M482 870V882H494" /><circle cx="528" cy="880" r="14" fill="#59606b" /><path d="M538 890 550 901" strokeWidth="8" />
        <path d="M508 1013V962H502L514 949 526 962H520V1013Z" fill="#59606b" /><path d="M502 998C470 992 478 974 508 975M520 975C560 977 560 996 520 998" /><path d="M490 998 502 990V1006Z" fill="#3a3f47" />
        <path d="M482 1076H498V1094H482ZM506 1076H522V1094H506ZM530 1076H547V1094H530ZM482 1103H529V1141H482Z" /><path d="M496 1110V1134L515 1122Z" fill="#3a3f47" />
      </g>
      <path d="M510 714H525L517 722ZM510 924H525L517 932ZM510 1038H525L517 1046Z" fill="#33383c" />
      <path d="M478 736H555M478 1060H555" stroke="#686d70" strokeWidth="2" />
    </svg>
  );
}

function Viewport() {
  return (
    <div className="h-[838px] bg-[#212830] relative overflow-hidden shrink-0 flex justify-end">
      <Scene />
      <ViewCube />
      <div className="absolute left-[3px] top-[5px] leading-[18px] text-[#f0f0f0] tracking-[-0.270px]">[−][NE Isometric][Conceptual]</div>
      <svg width="50" height="16" className="absolute left-[1850px] top-[7px]" fill="none"><path d="M1.500 9.500H11" stroke="#fff" strokeWidth="3" /><path d="M22 5H28V11.500H22Z" stroke="#fff" strokeWidth="2" /><path d="M24 2.500H30.500V9" stroke="#fff" strokeWidth="1.300" /><path d="M42 4.500 49 12M49 4.500 42 12" stroke="#fff" strokeWidth="2.200" /></svg>
      <div className="absolute left-[444px] top-[753px] flex flex-col items-start gap-[5px] whitespace-pre font-['DejaVu_Sans_Mono','Liberation_Mono',monospace] text-[11.700px] leading-[16px] tracking-[-0.030px]">
        <div className="bg-[#4c4f52] text-[#b4b4b4] rounded-sm px-[2px] h-[15px]">Select solids, surfaces, and regions to subtract ..</div>
        <div className="bg-[#56585a] text-[#dedede] rounded-sm px-[2px] h-[15px]">Select objects: 1 found</div>
        <div className="bg-[#606161] text-[#f4f4f4] rounded-sm px-[2px] h-[15px]">Select objects:</div>
      </div>
      <div className="absolute left-[384px] top-[811px] w-[1152px] h-[27px] flex rounded-sm bg-white border border-[#777]">
        <div className="w-[53px] bg-gradient-to-b from-[#858585] to-[#454545]">
          <svg width="53" height="25" fill="none">
            <g fill="#c8c8c8">{[0, 1, 2, 3, 4, 5].map((r) => [0, 1].map((c) => <rect key={`${r}${c}`} x={3 + c * 3} y={3 + r * 3} width="2" height="2" />))}</g>
            <path d="M15.500 8.500 22.500 16M22.500 8.500 15.500 16" stroke="#fff" strokeWidth="2.200" />
            <path d="M39 10.500 47 18" stroke="#eef0f4" strokeWidth="3" /><path d="M36 5.500 35 8.500 38 11.500 41.500 10.500 42 7.500 39.500 5" stroke="#eef0f4" strokeWidth="2" />
          </svg>
        </div>
        <svg width="40" height="25" fill="none"><rect x="5.500" y="5.500" width="14" height="13" fill="#dfe4ea" stroke="#8d949c" /><path d="M8 8.500 11.500 12 8 15.500M13 16H17" stroke="#444" strokeWidth="1.200" /><path d="M23.500 10H29L26.200 13.500Z" fill="#888" /></svg>
        <Tri s={8} c="#111" className="ml-auto mt-[10px] mr-[2px] rotate-180" />
      </div>
      <div className="w-2 bg-[#b3cbe7] border-r-2 border-r-[#39c2e8] z-10"><div className="h-[90px] bg-gradient-to-b from-[#b3cbe7] to-[#d5e3f3]" /></div>
    </div>
  );
}

/* ---------- layout tabs and status bar ---------- */
const Cell = ({ w, children }) => <div className={`${w} h-[26px] border border-[#8a8a8a] bg-[#4d4d4d] flex items-center shrink-0`}>{children}</div>;
const Star = ({ c }) => <path d="M7 0 8.800 9 13 12.500 14.500 16 9.500 13.500H4.500L-.5 16 1 12.500 5.200 9Z" fill={c} />;
function StatusBar() {
  return (
    <div className="h-[29px] bg-[#383838] flex justify-between shrink-0 border-t border-[#6a6a6a]">
      <svg width="240" height="28" fill="none">
        <defs><linearGradient id="mt" x1="0" y1="0" x2="0" y2="1"><stop offset="0" stopColor="#5b5b5b" /><stop offset="1" stopColor="#8b8b8b" /></linearGradient></defs>
        <path d="M68 0C72 12 72 17 79 17H126C133 17 131 8 136 0Z" fill="#545454" stroke="#646464" />
        <path d="M133 0C138 8 136 17 143 17H190C197 17 196 8 200 0Z" fill="#545454" stroke="#646464" />
        <path d="M5 0C16 4 12 17 20 17H62C69 17 67 6 71 0Z" fill="url(#mt)" />
        <path d="M204 15.500C205 5 208 1 211 0H226C226 9 222 15 217 15.500Z" fill="#545454" stroke="#5f5f5f" />
        <path d="M215 4V12M211 8H219" stroke="#bdbdbd" strokeWidth="2" />
        <text x="23" y="12" className="text-[12px] font-bold" fill="#fff" textLength="35" lengthAdjust="spacingAndGlyphs">Model</text>
        <text x="81" y="12" className="text-[12px]" fill="#b8b8b8" textLength="41" lengthAdjust="spacingAndGlyphs">Layout1</text>
        <text x="146" y="12" className="text-[12px]" fill="#b8b8b8" textLength="42" lengthAdjust="spacingAndGlyphs">Layout2</text>
      </svg>
      <div className="flex w-[566px] bg-[#5e5e5e] border-l border-[#777] text-white shrink-0">
        <Cell w="w-[49px] justify-center tracking-[-0.4px]">MODEL</Cell>
        <div className="w-[2px]" />
        <Cell w="w-[64px]">
          <Ic w={62} h={24}><path d="M4 5.500H18M4 9.500H18M4 13.500H18M4 17.500H18" stroke="#2f8dff" strokeDasharray="1 1" /><path d="M5.500 4V20M9.500 4V20M13.500 4V20M17 4V20" stroke="#2f8dff" strokeWidth="1.400" />
            <g fill="#cfcfcf">{[0, 1, 2, 3, 4].map((r) => [0, 1, 2, 3, 4].map((c) => <rect key={`${r}${c}`} x={27 + c * 3} y={6 + r * 3} width="1.200" height="1.200" />))}</g><path d="M51 10H58L54.500 14.500Z" fill="#fff" /></Ic>
        </Cell>
        <div className="w-[1px]" />
        <Cell w="w-[104px]">
          <Ic w={102} h={24}><path d="M6.500 6V18.500H19M6.500 13.500H11V18" stroke="#d0d0d0" strokeWidth="1.400" /><circle cx="35" cy="12.500" r="6.500" stroke="#2f8dff" strokeWidth="1.600" /><path d="M34 12.500H44M35 12.500 40 5" stroke="#2f8dff" strokeWidth="1.600" /><path d="M51 10H58L54.500 14.500ZM90 10H97L93.500 14.500Z" fill="#fff" /><path d="M67 4 83 20M74.500 3V19" stroke="#b8b8b8" strokeWidth="1.500" /></Ic>
        </Cell>
        <Cell w="w-[64px]">
          <Ic w={62} h={24}><path d="M4 18.500H19M5 18 17 6" stroke="#2f8dff" strokeWidth="1.900" /><circle cx="10" cy="13" r="1.800" fill="#2f8dff" /><rect x="30.500" y="5.500" width="12.500" height="13" stroke="#2f8dff" strokeWidth="1.600" /><rect x="29.500" y="4" width="4.500" height="4.500" fill="#12e012" stroke="#021" /><path d="M51 10H58L54.500 14.500Z" fill="#fff" /></Ic>
        </Cell>
        <div className="w-[2px]" />
        <Cell w="w-[107px]">
          <Ic w={76} h={24}>
            <g transform="translate(4 3.500)"><Star c="#2f8dff" /><circle cx="11.500" cy="3.500" r="2.800" fill="#4d4d4d" stroke="#2f8dff" strokeWidth="1.400" /></g>
            <g transform="translate(28 3.500)"><Star c="#c4c4c4" /><path d="M13 0 9.500 4H13.500L10 8" stroke="#c4c4c4" strokeWidth="1.500" /></g>
            <g transform="translate(52 3.500)"><Star c="#c4c4c4" /></g>
          </Ic>
          <span className="w-[17px] tracking-[-0.600px]">1:1</span>
          <Ic w={8} h={24}><path d="M0 10H7L3.500 14.500Z" fill="#fff" /></Ic>
        </Cell>
        <div className="w-[1px]" />
        <Cell w="w-[41px]"><Ic w={39} h={24}><circle cx="12" cy="12" r="3.500" stroke="#ccc" strokeWidth="3" /><circle cx="12" cy="12" r="5.600" stroke="#ccc" strokeWidth="1.800" strokeDasharray="2.400 2" /><path d="M28 10H35L31.500 14.500Z" fill="#fff" /></Ic></Cell>
        <Cell w="w-[26px]"><Ic w={24} h={24}><path d="M11.500 5V19M4.500 12H18.500" stroke="#d0d0d0" strokeWidth="1.800" /></Ic></Cell>
        <Cell w="w-[27px]"><Ic w={25} h={24}><path d="M4.500 4.500H10.500V10.500H4.500Z" stroke="#d0d0d0" strokeWidth="1.400" /><circle cx="15.500" cy="10.500" r="3" stroke="#d0d0d0" strokeWidth="1.400" /><path d="M7.500 18.500 10.500 12.500 13.500 18.500Z" stroke="#d0d0d0" strokeWidth="1.400" /></Ic></Cell>
        <Cell w="w-[27px]"><Ic w={25} h={24}><circle cx="12" cy="12" r="8" fill="#06509c" stroke="#1f86f0" strokeWidth="1.600" /><path d="M11 15 16 11.500" stroke="#3aa0ff" strokeWidth="1.500" /></Ic></Cell>
        <Cell w="w-[50px]"><Ic w={48} h={24}><rect x="4" y="5.500" width="15" height="12" stroke="#d5d5d5" strokeWidth="1.300" /><path d="M6.500 15V10.500L11 15ZM16.500 8V12.500L12 8Z" fill="#eee" /><path d="M27.500 5.500H43.500M27.500 12H43.500M27.500 18.500H43.500" stroke="#d5d5d5" strokeWidth="2" /></Ic></Cell>
      </div>
    </div>
  );
}

const ALogo = ({ w, h, c = 'url(#gRed)' }) => (
  <svg width={w} height={h} viewBox="0 0 24 27" fill="none" className="shrink-0">
    <path d="M8.500 0H15L24 26H19L16.800 20.500C12.500 19 8 20.500 5.500 26H0Z" fill={c} />
    <path d="M11.500 5.500 8 17C10.500 15.300 13 15.300 15.300 16.200Z" fill="#dcbcbc" opacity=".55" />
    <path d="M8.500 0 11.500 5.500 8 17 5.500 26H0Z" fill="#7e1016" opacity=".35" />
    <path d="M8.500 0 12 6 15.300 16.200" stroke="#f3686b" strokeWidth="1.100" opacity=".7" />
  </svg>
);

function Taskbar() {
  return (
    <div className="h-10 bg-[#010307] flex shrink-0 text-white text-[13px]">
      <svg width="48" height="40" className="shrink-0"><path d="M16 14.300 22.500 13.300V19.500H16ZM23.500 13.100 32 12V19.500H23.500ZM16 20.500H22.500V26.700L16 25.800ZM23.500 20.500H32V28L23.500 26.900Z" fill="#fff" /></svg>
      <div className="w-[344px] bg-[#333] flex items-center shrink-0">
        <svg width="36" height="40" fill="none" className="shrink-0"><circle cx="20" cy="20" r="9.200" stroke="#fff" strokeWidth="2.600" /></svg>
        <span className="text-[#999] text-[14.500px] w-[281px] tracking-[0.050px] pt-[2px]">Type here to search</span>
        <svg width="14" height="18" fill="none" stroke="#9a9a9a"><rect x="3.500" y="1.500" width="6" height="10" /><path d="M1.500 8V13.500H11.500V8M6.500 13.500V16.500M4 16.500H9" /></svg>
      </div>
      <div className="w-[104px] shrink-0">
        <svg width="104" height="40" fill="none"><path d="M18 14.500H14.500V26.500H18M30 14.500H33.500V26.500H30M18.500 12.500H29.500V27.500H18.500Z" stroke="#fff" strokeWidth="1.200" /><path d="M64 12H74L76 14H86V30H64Z" fill="#ffe08c" /><path d="M64 12H73V15H64Z" fill="#f0b93f" /><path d="M68 21H82V30H78V25.500H72V30H68Z" fill="#2ea6de" /></svg>
      </div>
      <div className="w-[152px] flex items-center border-b-2 border-[#76b9ed] shrink-0 pl-[6px] pt-px">
        <svg width="23" height="23" viewBox="0 0 24 24"><circle cx="12" cy="12" r="11.500" fill="#f6cb2c" /><path d="M12 12 2 6A11.500 11.500 0 0 1 22.500 7H12Z" fill="#dd4b3e" /><path d="M1.500 6.500A11.500 11.500 0 0 0 11 23.500L16 14.500 8 14Z" fill="#1ea362" /><circle cx="12" cy="12" r="5.300" fill="#fff" /><circle cx="12" cy="12" r="4.200" fill="#4688f1" /></svg>
        <span className="ml-[5px] pt-px text-[12.500px] tracking-[-0.350px] whitespace-nowrap">UCS (Command) | ...</span>
      </div>
      <svg width="103" height="40" className="shrink-0">
        <circle cx="28.500" cy="20" r="10.800" fill="#dd5a14" /><circle cx="30.500" cy="17" r="8.300" fill="#2d6fb5" /><path d="M26 12C29 9 35 11 36 15L33 18 29 14Z" fill="#7fb8e4" opacity=".7" />
        <path d="M18.500 12C20 15 22 13.500 25 14L24 17 27.500 18.500 24 20.500C25 24 29 24.500 32 23 36 21 38.500 17 38 13.500 41 21 37 30.500 28.500 30.800 20 31 15.500 22 18.500 12Z" fill="#ee7a18" /><path d="M38 13.500C41 21 37 30.500 28.500 30.800 33 28 37 22 38 13.500Z" fill="#f9c13a" />
        <path d="M66 21.500 73 18 75 20 71 25Z" fill="#3b8fb8" /><path d="M73 18 78.500 9.500 75 24 71 25Z" fill="#4a6f9f" /><path d="M78.500 9.500C81.500 14 84 23 89.500 28 86 25.500 83 25 79 30 77 25.500 75 26 71 25.500 75 22 77 16 78.500 9.500Z" fill="#e0591c" /><path d="M78.500 9.500C81.500 14 84 23 89.500 28 86 25.500 84 25 81.500 27 82 21 80 14 78.500 9.500Z" fill="#a5260e" /><path d="M77.500 17C77 22 76 24 74 25.500 77 25 78 27 79 30 80 26 79 20 77.500 17Z" fill="#f6a63a" />
      </svg>
      <div className="w-[160px] flex items-center bg-[#34383d] border-b-2 border-[#76b9ed] shrink-0 pl-[10px] pt-px">
        <div className="w-6 h-[25px] bg-[#f7e4df] flex items-center justify-center"><ALogo w={17} h={20} c="#b5202a" /></div>
        <span className="ml-[4px] pt-px text-[12.500px] tracking-[-0.400px] whitespace-nowrap">Autodesk AutoCAD...</span>
      </div>
      <svg width="140" height="40" className="shrink-0">
        <path d="M14.500 11C20 7.500 28 9.500 32 15L36 21 28 23C20 22 15 18 14.500 11Z" fill="#6fc0ec" /><path d="M13.500 14C17 22 23 26.500 30 25L31 30C22 33 12.500 26 13.500 14Z" fill="#4ba6dc" /><path d="M14 12C17 19 22 23.500 29 23.500L29 27C21 28 15 22 14 12Z" fill="#f4fafd" /><path d="M28 20.500 34.500 18.500 37 24 33.500 30H29L27.500 25Z" fill="#0f66a5" />
        <g transform="translate(1)"><path d="M73 8 79 14.500 73 20 67 14.500Z" fill="#ef6b66" /><path d="M67 14.500 73 20 67 26.500 61 20.500Z" fill="#6fa6f2" /><path d="M79 14.500 85 20.500 79 26.500 73 20Z" fill="#76c25f" /><path d="M73 20 79 26.500 73 33 67 26.500Z" fill="#f7d35c" /><path d="M70 12 73 16V27M73 16 78 20.500" stroke="#2b2b2b" strokeWidth="1.800" fill="none" /><circle cx="73" cy="27" r="2.200" fill="#2b2b2b" /><circle cx="78.500" cy="20.500" r="2.200" fill="#2b2b2b" /><circle cx="73" cy="16" r="1.900" fill="#2b2b2b" /></g>
        <rect x="112" y="9" width="22" height="23" fill="#f2f2f2" /><rect x="111" y="8" width="24" height="8" fill="#1653b5" /><text x="115.500" y="15" fill="#fff" className="text-[9px] font-bold" textLength="15">Tek</text><rect x="116" y="20.500" width="14" height="7.500" fill="#111" /><path d="M117 26H120V23H126V26H129" stroke="#d8e020" fill="none" /><path d="M117 18.500H130M117 30H130" stroke="#222" />
      </svg>
      <div className="ml-auto flex items-center">
        <svg width="72" height="40" fill="none" stroke="#fff" strokeWidth="1.200"><path d="M2 22.500 8 16.500 14 22.500" /><path d="M27.500 16V14.500H39.500V23.500H29M33.500 23.500V26.500M29.500 26.500H37.500M23.500 14.500H28V18H23.500ZM25.500 18V26.500H28" /><path d="M47.500 18H50L53.500 14V26L50 22H47.500ZM56 17.500C57.500 19 57.500 21 56 22.500M58.500 15.500C61 18 61 22 58.500 24.500M61 13.500C64.500 17 64.500 23 61 26.500" /></svg>
        <div className="w-[56px] text-center text-[12px] leading-[18px] tracking-[-0.300px] -mt-[1px] whitespace-nowrap">12:02 PM<br />8/11/2017</div>
        <svg width="57" height="40" fill="none" stroke="#fff" strokeWidth="1.200"><path d="M15.500 13.500H31.500V26.500H26L23.500 29.500V26.500H15.500Z" /><path d="M52.500 0V40" stroke="#555" /></svg>
      </div>
    </div>
  );
}

export default function App() {
  return (
    <div className="w-[1920px] h-[1080px] flex flex-col overflow-hidden relative bg-[#383838] text-[12px] tracking-[-0.3px] font-['Noto_Sans','Open_Sans',sans-serif]">
      <Defs />
      <TitleBar />
      <Ribbon />
      <FileTabs />
      <Viewport />
      <StatusBar />
      <Taskbar />
      <div className="absolute left-0 top-0 w-[41px] h-[41px] border border-black bg-gradient-to-b from-[#b0b0b0] to-[#5c5c5c] flex pl-[4px] pt-[2px]">
        <ALogo w={24} h={27} /><Tri s={7} c="#222" className="mt-[16px] ml-[3px]" />
      </div>
    </div>
  );
}
